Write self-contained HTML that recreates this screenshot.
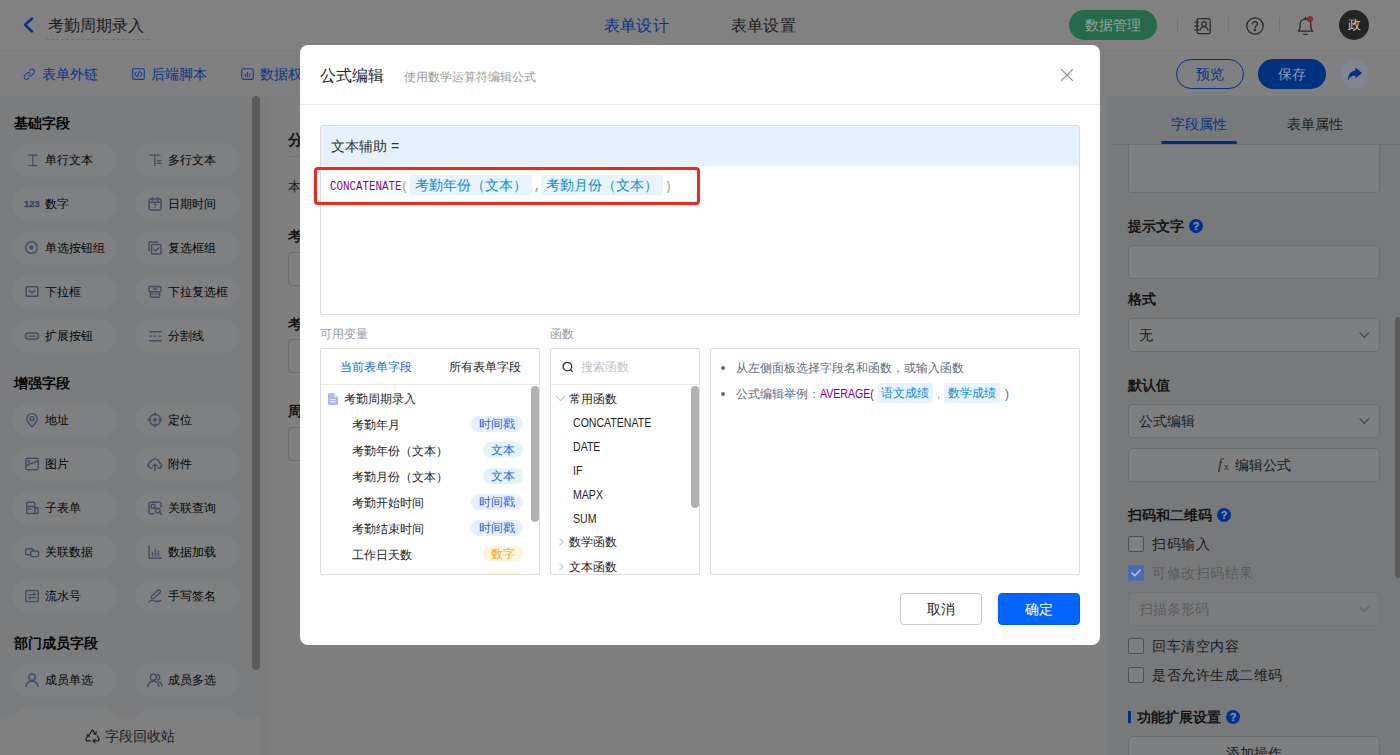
<!DOCTYPE html>
<html lang="zh">
<head>
<meta charset="utf-8">
<title>公式编辑</title>
<style>
*{box-sizing:border-box;margin:0;padding:0}
html,body{width:1400px;height:755px;overflow:hidden}
body{position:relative;background:#808080;font-family:"Liberation Sans",sans-serif;font-size:12px;color:#141414}
.abs{position:absolute}
svg{display:block;overflow:visible}
/* ---------- header ---------- */
#hdr{position:absolute;left:0;top:0;width:1400px;height:51px;background:#818181;border-bottom:1px solid #7a7a7a}
#tool{position:absolute;left:0;top:51px;width:1400px;height:45px;background:#808080;z-index:2}
.t{position:absolute;white-space:nowrap;line-height:1}
/* ---------- main ---------- */
#main{position:absolute;left:0;top:95px;width:1400px;height:660px;background:#78797b}
#side{position:absolute;left:0;top:0;width:268px;height:660px;background:#7b7c7e;overflow:hidden}
#canvas{position:absolute;left:268px;top:0;width:838px;height:660px;background:#7f7f80}
#gapR{position:absolute;left:1106px;top:0;width:1px;height:660px;background:#78797b}
#right{position:absolute;left:1107px;top:0;width:293px;height:660px;background:#78797b;overflow:hidden}
.pill{position:absolute;width:105px;height:34px;border-radius:17px;background:#7f8081}
.pill .ic{position:absolute;left:12.1px;top:9px;width:16px;height:16px}
.pill .tx{position:absolute;left:33px;top:11px;font-size:12px;line-height:12px;color:#050505;white-space:nowrap}
.sec{position:absolute;left:14px;font-size:14px;line-height:14px;font-weight:bold;color:#060606}
.bx{border:1px solid #6c6d6f;border-radius:4px;background:#7e7f81}
/* ---------- modal ---------- */
#modal{z-index:10;position:absolute;left:300px;top:45px;width:800px;height:600px;background:#fff;border-radius:8px}
.pn{border:1px solid #dcdcdc;border-radius:2px;background:#fff;overflow:hidden}
.chip{background:#e8f3fe;color:#0f8bd6;border-radius:3px;white-space:nowrap}
.mono{font-family:"Liberation Mono",monospace;font-size:12px;line-height:14px;transform:scaleX(.903);transform-origin:0 50%}
.fn{font-size:12px;line-height:12px;color:#232325;transform:scaleX(.88);transform-origin:0 50%}
</style>
</head>
<body>
<div id="hdr">
  <svg class="abs" style="left:22px;top:17px" width="12" height="16" viewBox="0 0 12 16"><path d="M10 1.5 L3 8 L10 14.5" fill="none" stroke="#06338c" stroke-width="2.4" stroke-linecap="round" stroke-linejoin="round"/></svg>
  <div class="t" style="left:48px;top:17px;font-size:16px;line-height:18px;color:#1b1b1b">考勤周期录入</div>
  <div class="abs" style="left:46px;top:39px;width:104px;height:0;border-top:1px dashed #6f6f6f"></div>
  <div class="t" style="left:603.500px;top:17px;letter-spacing:.45px;font-size:16px;line-height:18px;color:#06338c">表单设计</div>
  <div class="t" style="left:730.500px;top:17px;letter-spacing:.45px;font-size:16px;line-height:18px;color:#1d1d1d">表单设置</div>
  <div class="abs" style="left:1069px;top:10px;width:88px;height:30px;border-radius:15px;background:#256b4b"></div>
  <div class="t" style="left:1085px;top:17px;font-size:14px;line-height:16px;color:#97a39b">数据管理</div>
  <div class="abs" style="left:1177px;top:18px;width:1px;height:14px;background:#737373"></div>
  <div class="abs" style="left:1228px;top:18px;width:1px;height:14px;background:#737373"></div>
  <div class="abs" style="left:1279px;top:18px;width:1px;height:14px;background:#737373"></div>
  <!-- contacts -->
  <svg class="abs" style="left:1194px;top:16.700px" width="18" height="18" viewBox="0 0 18 18" fill="none" stroke="#2b2b2b" stroke-width="1.3" stroke-linecap="round" stroke-linejoin="round"><rect x="3.2" y="1.6" width="13" height="15" rx="1.6"/><path d="M1 5.2h3.4M1 9h3.4M1 12.8h3.4"/><circle cx="10" cy="7" r="2.3"/><path d="M6 13.2c.3-2.3 1.9-3.4 4-3.4s3.700 1.100 4 3.400"/></svg>
  <!-- help -->
  <svg class="abs" style="left:1246px;top:16.800px" width="18" height="18" viewBox="0 0 18 18" fill="none" stroke="#2b2b2b" stroke-width="1.3" stroke-linecap="round" stroke-linejoin="round"><circle cx="9" cy="9" r="8.2"/><path d="M6.600 7.100c0-1.500 1.100-2.400 2.400-2.400s2.400.9 2.400 2.200c0 1.700-2.400 1.900-2.400 3.700"/><circle cx="9" cy="13" r=".5" fill="#2b2b2b"/></svg>
  <!-- bell -->
  <svg class="abs" style="left:1297px;top:15.700px" width="17" height="20" viewBox="0 0 17 20" fill="none" stroke="#2b2b2b" stroke-width="1.3" stroke-linecap="round" stroke-linejoin="round"><path d="M1.200 15.200h14.600c-1.400-1-1.900-2.300-1.900-4.200V8.400c0-3-2.200-5.400-5.400-5.400S3.100 5.400 3.100 8.400V11c0 1.900-.5 3.200-1.900 4.200z"/><path d="M6.800 18.300h3.400"/><path d="M8.500 3V1.400"/></svg>
  <div class="abs" style="left:1307px;top:16px;width:6px;height:6px;border-radius:3px;background:#92292d"></div>
  <div class="abs" style="left:1339px;top:10px;width:30px;height:30px;border-radius:15px;background:#242424"></div>
  <div class="t" style="left:1347.500px;top:17px;font-size:13px;line-height:16px;color:#cfcfcf">政</div>
</div>
<div id="tool">
  <svg class="abs" style="left:23px;top:17px" width="12.500" height="12.500" viewBox="0 0 14 14" fill="none" stroke="#163b9a" stroke-width="1.150" stroke-linecap="round" stroke-linejoin="round"><path d="M6 8a2.700 2.700 0 0 0 3.800 0l2.400-2.400a2.700 2.700 0 0 0-3.800-3.800L7.300 2.900"/><path d="M8 6a2.700 2.700 0 0 0-3.800 0L1.800 8.400a2.700 2.700 0 0 0 3.800 3.800l1.100-1.100"/></svg>
  <div class="t" style="left:42px;top:15px;font-size:14px;line-height:16px;color:#06338c">表单外链</div>
  <svg class="abs" style="left:132px;top:17px" width="13" height="12" viewBox="0 0 13 12" fill="none" stroke="#163b9a" stroke-width="1.150" stroke-linecap="round" stroke-linejoin="round"><rect x=".7" y=".7" width="11.600" height="10.600" rx="1"/><path d="M4.400 4L2.800 6l1.600 2M8.600 4l1.600 2-1.600 2M7.300 3.200L5.700 8.800"/></svg>
  <div class="t" style="left:151px;top:15px;font-size:14px;line-height:16px;color:#06338c">后端脚本</div>
  <svg class="abs" style="left:241px;top:17px" width="13" height="12" viewBox="0 0 13 12" fill="none" stroke="#163b9a" stroke-width="1.150" stroke-linecap="round" stroke-linejoin="round"><rect x=".7" y=".7" width="11.600" height="10.600" rx="2"/><path d="M4.300 8.400V6.600M6.500 8.400V4.600M8.700 8.400V5.800"/></svg>
  <div class="t" style="left:260px;top:15px;font-size:14px;line-height:16px;color:#06338c">数据权限</div>
  <div class="abs" style="left:1176px;top:8px;width:68px;height:30px;border-radius:15px;border:1px solid #06338c"></div>
  <div class="t" style="left:1196px;top:15px;font-size:14px;line-height:16px;color:#06338c">预览</div>
  <div class="abs" style="left:1258px;top:8px;width:68px;height:30px;border-radius:15px;background:#01327f"></div>
  <div class="t" style="left:1278px;top:15px;font-size:14px;line-height:16px;color:#8e99b3">保存</div>
  <div class="abs" style="left:1340px;top:8px;width:30px;height:30px;border-radius:15px;background:#82858b;border:1px solid #7a8192"></div>
  <svg class="abs" style="left:1347px;top:16px" width="16" height="14" viewBox="0 0 16 14"><path d="M8.500.6L15 6 8.500 11.300V8.500C5 8.500 2.500 10 1 13.200 1 8 3.500 4 8.500 3.500z" fill="#022e8a"/></svg>
</div>
<div id="main">
  <div id="side">
  <div class="sec" style="top:21px">基础字段</div>
  <div class="sec" style="top:281px">增强字段</div>
  <div class="sec" style="top:541px">部门成员字段</div>
  <div class="pill" style="left:12px;top:48px"><svg class="ic" viewBox="0 0 16 16" fill="none" stroke="#454c62" stroke-width="1.45" stroke-linecap="round" stroke-linejoin="round"><path d="M4.800 3.200h8.200M4.800 13.600h8.200M8.900 3.200v10.400" stroke-width="1.250"/></svg><span class="tx">单行文本</span></div>
  <div class="pill" style="left:135px;top:48px"><svg class="ic" viewBox="0 0 16 16" fill="none" stroke="#454c62" stroke-width="1.45" stroke-linecap="round" stroke-linejoin="round"><path d="M2.600 3.200h10.400M7.800 3.200v10.600M10 8.900h4M10 11.400h4" stroke-width="1.250"/></svg><span class="tx">多行文本</span></div>
  <div class="pill" style="left:12px;top:92px"><div class="ic" style="left:12px;top:10px;width:24px;font:bold 9.4px/14px 'Liberation Sans',sans-serif;color:#3f465f;letter-spacing:0;-webkit-text-stroke:.35px #3f465f">123</div><span class="tx">数字</span></div>
  <div class="pill" style="left:135px;top:92px"><svg class="ic" viewBox="0 0 16 16" fill="none" stroke="#454c62" stroke-width="1.45" stroke-linecap="round" stroke-linejoin="round"><rect x="2" y="3" width="12" height="11" rx="1.600"/><path d="M5.300 1.600v2.800M10.700 1.600v2.800M2.300 6.200h11.400"/><path d="M6.800 8.400h2.600l-1.700 3.600" stroke-width="1"/></svg><span class="tx">日期时间</span></div>
  <div class="pill" style="left:12px;top:136px"><svg class="ic" viewBox="0 0 16 16" fill="none" stroke="#454c62" stroke-width="1.45" stroke-linecap="round" stroke-linejoin="round"><circle cx="7.500" cy="7.600" r="5.800"/><circle cx="7.500" cy="7.600" r="1.400" fill="#454c62"/></svg><span class="tx">单选按钮组</span></div>
  <div class="pill" style="left:135px;top:136px"><svg class="ic" viewBox="0 0 16 16" fill="none" stroke="#454c62" stroke-width="1.45" stroke-linecap="round" stroke-linejoin="round"><path d="M2 10.500V3.200A1.200 1.200 0 0 1 3.200 2h7.300"/><rect x="4.500" y="4.500" width="9.500" height="9.500" rx="1"/><path d="M6.800 9.200l1.900 1.900 3.200-3.400"/></svg><span class="tx">复选框组</span></div>
  <div class="pill" style="left:12px;top:180px"><svg class="ic" viewBox="0 0 16 16" fill="none" stroke="#454c62" stroke-width="1.45" stroke-linecap="round" stroke-linejoin="round"><rect x="2.200" y="2.800" width="11.600" height="9.400" rx=".8"/><path d="M5.200 6.500L8 9l2.800-2.500"/></svg><span class="tx">下拉框</span></div>
  <div class="pill" style="left:135px;top:180px"><svg class="ic" viewBox="0 0 16 16" fill="none" stroke="#454c62" stroke-width="1.45" stroke-linecap="round" stroke-linejoin="round"><rect x="2" y="2.500" width="12" height="5.200" rx="1.200"/><path d="M6.500 4.300l1.500 1.500 1.500-1.500"/><path d="M3.300 7.700v4.300a1.300 1.300 0 0 0 1.300 1.300h6.800a1.300 1.300 0 0 0 1.300-1.300V7.700"/><path d="M3.300 10.200h9.400" stroke-width="1"/></svg><span class="tx">下拉复选框</span></div>
  <div class="pill" style="left:12px;top:224px"><svg class="ic" viewBox="0 0 16 16" fill="none" stroke="#454c62" stroke-width="1.45" stroke-linecap="round" stroke-linejoin="round"><rect x="1.400" y="5" width="13.200" height="6.200" rx="3.100" stroke-width="1.500"/><path d="M4.800 8.100h6.400" stroke-width="1.100"/></svg><span class="tx">扩展按钮</span></div>
  <div class="pill" style="left:135px;top:224px"><svg class="ic" viewBox="0 0 16 16" fill="none" stroke="#454c62" stroke-width="1.45" stroke-linecap="round" stroke-linejoin="round"><path d="M2.400 3.700h11.600M2.400 12.700h11.600"/><path d="M2.400 8.100h11.600" stroke-dasharray="2.900 1.450" stroke-linecap="butt"/></svg><span class="tx">分割线</span></div>
  <div class="pill" style="left:12px;top:308px"><svg class="ic" viewBox="0 0 16 16" fill="none" stroke="#454c62" stroke-width="1.45" stroke-linecap="round" stroke-linejoin="round"><path d="M8 14.800c3.200-3 5.200-5.400 5.200-8A5.200 5.200 0 0 0 2.800 6.800c0 2.600 2 5 5.200 8z"/><circle cx="8" cy="6.600" r="1.900"/></svg><span class="tx">地址</span></div>
  <div class="pill" style="left:135px;top:308px"><svg class="ic" viewBox="0 0 16 16" fill="none" stroke="#454c62" stroke-width="1.45" stroke-linecap="round" stroke-linejoin="round"><circle cx="8" cy="7.800" r="5.500"/><circle cx="8" cy="7.800" r="1.200" fill="#454c62"/><path d="M8 1v2.600M8 12v2.600M1.200 7.800h2.600M12.200 7.800h2.600"/></svg><span class="tx">定位</span></div>
  <div class="pill" style="left:12px;top:352px"><svg class="ic" viewBox="0 0 16 16" fill="none" stroke="#454c62" stroke-width="1.45" stroke-linecap="round" stroke-linejoin="round"><rect x="1.800" y="2.200" width="12.400" height="11.600" rx="1.600"/><path d="M2.200 9.600c2.400-.2 3.600-2.600 5.600-2.400 1.700.2 3.600-1.200 6-2.800"/><circle cx="4.800" cy="5.200" r=".7" fill="#454c62"/></svg><span class="tx">图片</span></div>
  <div class="pill" style="left:135px;top:352px"><svg class="ic" viewBox="0 0 16 16" fill="none" stroke="#454c62" stroke-width="1.45" stroke-linecap="round" stroke-linejoin="round"><path d="M5 12.200H4.200A3.200 3.200 0 0 1 3.700 5.900 4.500 4.500 0 0 1 12.400 6.700a2.800 2.800 0 0 1-.4 5.500H11"/><path d="M8 14.500V8.200M5.800 10.200L8 8l2.200 2.200"/></svg><span class="tx">附件</span></div>
  <div class="pill" style="left:12px;top:396px"><svg class="ic" viewBox="0 0 16 16" fill="none" stroke="#454c62" stroke-width="1.45" stroke-linecap="round" stroke-linejoin="round"><rect x="2.800" y="2.300" width="7.900" height="11.100" rx="1"/><path d="M2.800 6.500h7.900M4.300 8.900h2.600"/><rect x="10.700" y="7.800" width="3.400" height="5.600" rx=".6"/></svg><span class="tx">子表单</span></div>
  <div class="pill" style="left:135px;top:396px"><svg class="ic" viewBox="0 0 16 16" fill="none" stroke="#454c62" stroke-width="1.45" stroke-linecap="round" stroke-linejoin="round"><path d="M14 7V3.400a1.200 1.200 0 0 0-1.200-1.200H3.200A1.200 1.200 0 0 0 2 3.400v9.200a1.200 1.200 0 0 0 1.200 1.200H7"/><rect x="4.300" y="4.500" width="3.400" height="3.400"/><circle cx="10.800" cy="10.600" r="2.300"/><path d="M12.500 12.300l2 2M7.700 7.900l1.500 1.200"/></svg><span class="tx">关联查询</span></div>
  <div class="pill" style="left:12px;top:440px"><svg class="ic" viewBox="0 0 16 16" fill="none" stroke="#454c62" stroke-width="1.45" stroke-linecap="round" stroke-linejoin="round"><path d="M6.500 10.800H3.200A1.600 1.600 0 0 1 1.600 9.200V6.400a1.600 1.600 0 0 1 1.600-1.600h4.600a1.600 1.600 0 0 1 1.600 1.600v.8"/><rect x="6.600" y="7" width="8" height="5.600" rx="1.600"/></svg><span class="tx">关联数据</span></div>
  <div class="pill" style="left:135px;top:440px"><svg class="ic" viewBox="0 0 16 16" fill="none" stroke="#454c62" stroke-width="1.45" stroke-linecap="round" stroke-linejoin="round"><path d="M2 1.800v12.400h12.400"/><path d="M5.400 12V8.200M8.400 12V5.400M11.400 12V7"/></svg><span class="tx">数据加载</span></div>
  <div class="pill" style="left:12px;top:484px"><svg class="ic" viewBox="0 0 16 16" fill="none" stroke="#454c62" stroke-width="1.45" stroke-linecap="round" stroke-linejoin="round"><rect x="1.800" y="2.400" width="12.400" height="11.200" rx=".8"/><path d="M4.600 6.600h6.800l-1.600-1.500M11.400 9.400H4.600l1.600 1.500"/></svg><span class="tx">流水号</span></div>
  <div class="pill" style="left:135px;top:484px"><svg class="ic" viewBox="0 0 16 16" fill="none" stroke="#454c62" stroke-width="1.45" stroke-linecap="round" stroke-linejoin="round"><path d="M4.200 10.800l.5-2.600 6-6a1.300 1.300 0 0 1 1.900 0l.4.400a1.300 1.300 0 0 1 0 1.900l-6 6z"/><path d="M2 13.800c2-1.600 3.800-1.800 5.600-.9 1.700.9 3.600.7 6.200-.3"/></svg><span class="tx">手写签名</span></div>
  <div class="pill" style="left:12px;top:568px"><svg class="ic" viewBox="0 0 16 16" fill="none" stroke="#454c62" stroke-width="1.45" stroke-linecap="round" stroke-linejoin="round"><circle cx="8" cy="5.200" r="3.200"/><path d="M2 14.600c.4-3.600 2.800-5.400 6-5.400s5.600 1.800 6 5.400"/></svg><span class="tx">成员单选</span></div>
  <div class="pill" style="left:135px;top:568px"><svg class="ic" viewBox="0 0 16 16" fill="none" stroke="#454c62" stroke-width="1.45" stroke-linecap="round" stroke-linejoin="round"><circle cx="6.400" cy="5.200" r="3"/><path d="M1 14.200c.3-3.300 2.500-5 5.400-5s5.100 1.700 5.400 5"/><path d="M10.400 2.500a2.900 2.900 0 0 1 .3 5.600M12.200 9.600c1.600.7 2.600 2.200 2.800 4.400"/></svg><span class="tx">成员多选</span></div>
  <div class="pill" style="left:12px;top:612px"><span class="tx">部门单选</span></div>
  <div class="pill" style="left:135px;top:612px"><span class="tx">部门多选</span></div>
  <div class="abs" style="left:252px;top:1px;width:8px;height:574px;border-radius:4px;background:#5b5b5b"></div>
  <div class="abs" style="left:0;top:622px;width:260px;height:38px;background:#808080"></div>
  <svg class="abs" style="left:84.500px;top:633.500px" width="15" height="14" viewBox="0 0 15 14" fill="none" stroke="#1c1c1c" stroke-width="1.200" stroke-linecap="round" stroke-linejoin="round"><path d="M5 4.600L7.400.8l2.500 3.800"/><path d="M8.600 5.200l2.600.3.200-2.600z" fill="#1c1c1c" stroke-width=".6"/><path d="M12.200 6.800l2 3.400-1 1.700H8.400"/><path d="M9.900 10.200L8.200 11.900l1.700 1.700"/><path d="M5.600 11.900H1.700L.8 10.200l2.100-3.400"/><path d="M1.700 5.800l2.500-.4.500 2.500z" fill="#1c1c1c" stroke-width=".6"/></svg>
  <div class="t" style="left:105px;top:633px;font-size:14px;line-height:16px;color:#1c1c1c">字段回收站</div>
</div>
  <div id="canvas">
  <div class="t" style="left:20px;top:37.300px;font-size:15px;line-height:16px;font-weight:bold;color:#151515">分组标题</div>
  <div class="abs" style="left:20px;top:61px;width:792px;height:1px;background:#747474"></div>
  <div class="t" style="left:20px;top:85px;font-size:13px;line-height:14px;color:#1c1c1c">本表单用于录入考勤周期</div>
  <div class="t" style="left:20px;top:134px;font-size:14px;line-height:14px;font-weight:bold;color:#151515">考勤年月</div>
  <div class="abs bx" style="left:20px;top:157px;width:380px;height:34px"></div>
  <div class="t" style="left:20px;top:221.500px;font-size:14px;line-height:14px;font-weight:bold;color:#151515">考勤年份</div>
  <div class="abs bx" style="left:20px;top:244px;width:380px;height:34px"></div>
  <div class="t" style="left:20px;top:309px;font-size:14px;line-height:14px;font-weight:bold;color:#151515">周期</div>
  <div class="abs bx" style="left:20px;top:332px;width:380px;height:34px"></div>
</div>
  <div id="gapR"></div>
  <div id="right">
<div class="abs bx" style="left:21px;top:40px;width:252px;height:58px"></div>
<div class="abs" style="left:0;top:0;width:293px;height:49px;background:#78797b"></div>
<div class="t" style="left:64px;top:22px;font-size:14px;line-height:14px;color:#06338c">字段属性</div>
<div class="t" style="left:180px;top:22px;font-size:14px;line-height:14px;color:#1c1c1c">表单属性</div>
<div class="abs" style="left:7px;top:49px;width:286px;height:1px;background:#6e6f71"></div>
<div class="abs" style="left:54px;top:46px;width:76px;height:3px;border-radius:1.500px;background:#012e84"></div>
<div class="t" style="left:21px;top:124px;font-size:14px;line-height:14px;font-weight:bold;color:#141414">提示文字</div><div class="abs" style="left:82px;top:124px;width:14px;height:14px;border-radius:7px;background:#02318c;color:#8e9fc4;font:bold 11px/14px 'Liberation Sans',sans-serif;text-align:center">?</div>
<div class="abs bx" style="left:21px;top:150px;width:252px;height:34px"></div>
<div class="t" style="left:21px;top:197px;font-size:14px;line-height:14px;font-weight:bold;color:#141414">格式</div>
<div class="abs bx" style="left:21px;top:223px;width:252px;height:34px"></div>
<div class="t" style="left:32px;top:233px;font-size:14px;line-height:14px;color:#1c1c1c">无</div><svg class="abs" style="left:252px;top:237px" width="10.500" height="6.100" viewBox="0 0 12 7"><path d="M1 1l5 5 5-5" fill="none" stroke="#44474e" stroke-width="1.450" stroke-linecap="round" stroke-linejoin="round"/></svg>
<div class="t" style="left:21px;top:283px;font-size:14px;line-height:14px;font-weight:bold;color:#141414">默认值</div>
<div class="abs bx" style="left:21px;top:309px;width:252px;height:34px"></div>
<div class="t" style="left:32px;top:319px;font-size:14px;line-height:14px;color:#1c1c1c">公式编辑</div><svg class="abs" style="left:252px;top:323px" width="10.500" height="6.100" viewBox="0 0 12 7"><path d="M1 1l5 5 5-5" fill="none" stroke="#44474e" stroke-width="1.450" stroke-linecap="round" stroke-linejoin="round"/></svg>
<div class="abs bx" style="left:21px;top:353px;width:252px;height:34px"></div>
<div class="t" style="left:111px;top:361px;font:italic 15px/16px 'Liberation Serif',serif;color:#2a2a2a">f</div><div class="t" style="left:117px;top:368px;font-size:9px;line-height:9px;color:#2a2a2a">x</div>
<div class="t" style="left:128px;top:363px;font-size:14px;line-height:14px;color:#1c1c1c">编辑公式</div>
<div class="t" style="left:21px;top:413px;font-size:14px;line-height:14px;font-weight:bold;color:#141414">扫码和二维码</div><div class="abs" style="left:110px;top:413px;width:14px;height:14px;border-radius:7px;background:#02318c;color:#8e9fc4;font:bold 11px/14px 'Liberation Sans',sans-serif;text-align:center">?</div>
<div class="abs" style="left:21px;top:441px;width:16px;height:16px;border-radius:2px;border:1px solid #4c4f55;background:#7e7f81"></div><div class="t" style="left:45px;top:442px;font-size:14px;line-height:14px;letter-spacing:.5px;color:#1a1a1a">扫码输入</div>
<div class="abs" style="left:21px;top:470px;width:16px;height:16px;border-radius:2px;background:#4a6cb3"></div><svg class="abs" style="left:24px;top:474px" width="10" height="8" viewBox="0 0 10 8"><path d="M1 4l2.800 2.800L9 1.200" fill="none" stroke="#b9c3da" stroke-width="1.600" stroke-linecap="round" stroke-linejoin="round"/></svg><div class="t" style="left:45px;top:471px;font-size:14px;line-height:14px;letter-spacing:.5px;color:#5b5b5b">可修改扫码结果</div>
<div class="abs" style="left:21px;top:497px;width:252px;height:34px;border:1px solid #737476;border-radius:4px;background:#7b7c7e"></div>
<div class="t" style="left:32px;top:507px;font-size:14px;line-height:14px;color:#5e5e5e">扫描条形码</div><svg class="abs" style="left:252px;top:511px" width="10.500" height="6.100" viewBox="0 0 12 7"><path d="M1 1l5 5 5-5" fill="none" stroke="#63656a" stroke-width="1.450" stroke-linecap="round" stroke-linejoin="round"/></svg>
<div class="abs" style="left:21px;top:543px;width:16px;height:16px;border-radius:2px;border:1px solid #4c4f55;background:#7e7f81"></div><div class="t" style="left:45px;top:544px;font-size:14px;line-height:14px;letter-spacing:.5px;color:#1a1a1a">回车清空内容</div>
<div class="abs" style="left:21px;top:572px;width:16px;height:16px;border-radius:2px;border:1px solid #4c4f55;background:#7e7f81"></div><div class="t" style="left:45px;top:573px;font-size:14px;line-height:14px;letter-spacing:.5px;color:#1a1a1a">是否允许生成二维码</div>
<div class="abs" style="left:21px;top:616px;width:3px;height:12px;background:#012e84"></div>
<div class="t" style="left:30px;top:615px;font-size:14px;line-height:14px;font-weight:bold;color:#141414">功能扩展设置</div><div class="abs" style="left:119px;top:615px;width:14px;height:14px;border-radius:7px;background:#02318c;color:#8e9fc4;font:bold 11px/14px 'Liberation Sans',sans-serif;text-align:center">?</div>
<div class="abs bx" style="left:21px;top:641px;width:252px;height:34px"></div>
<div class="t" style="left:119px;top:651px;font-size:14px;line-height:14px;color:#1c1c1c">添加操作</div>
<div class="abs" style="left:288px;top:222px;width:6px;height:261px;border-radius:3px;background:#5c5c5c"></div>
</div>
</div>
<div id="modal">
<div class="t" style="left:20px;top:22px;font-size:16px;line-height:18px;color:#262626">公式编辑</div>
<div class="t" style="left:104px;top:25px;font-size:12px;line-height:14px;color:#9a9a9a">使用数学运算符编辑公式</div>
<svg class="abs" style="left:761px;top:24px" width="12" height="12" viewBox="0 0 12 12"><path d="M.6.6l10.800 10.800M11.400.6L.6 11.400" fill="none" stroke="#8a8a8a" stroke-width="1.200" stroke-linecap="round"/></svg>
<div class="abs" style="left:0;top:59px;width:800px;height:1px;background:#e9e9e9"></div>
<div class="abs" style="left:20px;top:80px;width:760px;height:190px;border:1px solid #dcdcdc;border-radius:2px;background:#fff"></div>
<div class="abs" style="left:21px;top:81px;width:758px;height:40px;background:#e5f2fd"></div>
<div class="t" style="left:31px;top:94px;font-size:14px;line-height:14px;color:#303030">文本辅助 =</div>
<div class="abs" style="left:14px;top:122px;width:386px;height:38px;border:3px solid #f4261d;border-radius:4px"></div>
<div class="t mono" style="left:30px;top:135px;color:#7b0a8c">CONCATENATE<span style="color:#999977">(</span></div>
<div class="abs chip" style="left:110px;top:130px;width:122px;height:20px;font-size:14px;line-height:20px;padding-left:5px">考勤年份（文本）</div>
<div class="t mono" style="left:234px;top:135px;color:#999977;font-weight:bold">,</div>
<div class="abs chip" style="left:241px;top:130px;width:122px;height:20px;font-size:14px;line-height:20px;padding-left:5px">考勤月份（文本）</div>
<div class="t mono" style="left:365px;top:135px;color:#999977">)</div>
<div class="t" style="left:20px;top:283px;font-size:12px;line-height:12px;color:#939aa6">可用变量</div>
<div class="t" style="left:250px;top:283px;font-size:12px;line-height:12px;color:#939aa6">函数</div>
<div class="abs pn" style="left:20px;top:303px;width:220px;height:227px">
<div class="abs" style="left:0;top:35px;width:218px;height:1px;background:#e6e6e6"></div>
<div class="t" style="left:19px;top:12px;font-size:12px;line-height:12px;color:#1564f4">当前表单字段</div>
<div class="t" style="left:128px;top:12px;font-size:12px;line-height:12px;color:#232325">所有表单字段</div>
<svg class="abs" style="left:7px;top:44px" width="10" height="12" viewBox="0 0 10 12"><path d="M1.200 0h5L10 3.800v7a1.200 1.200 0 0 1-1.200 1.200H1.200A1.200 1.200 0 0 1 0 10.800V1.200A1.200 1.200 0 0 1 1.200 0z" fill="#a9b7fb"/><path d="M6 0v3a1 1 0 0 0 1 1h3z" fill="#dfe5ff"/><path d="M2.300 6.500h5.400M2.300 8.800h5.400" stroke="#fff" stroke-width="1"/></svg>
<div class="t" style="left:23px;top:44px;font-size:12px;line-height:12px;color:#232325">考勤周期录入</div>
<div class="t" style="left:31px;top:69.9px;font-size:12px;line-height:12px;color:#232325">考勤年月</div>
<div class="abs" style="left:150px;top:67.3px;width:52px;height:16px;border-radius:8px;background:#e8f0fe;color:#2b60ec;font-size:12px;line-height:16px;text-align:center">时间戳</div>
<div class="t" style="left:31px;top:95.9px;font-size:12px;line-height:12px;color:#232325">考勤年份（文本）</div>
<div class="abs" style="left:162px;top:93.3px;width:40px;height:16px;border-radius:8px;background:#e2f5f4;color:#2468f2;font-size:12px;line-height:16px;text-align:center">文本</div>
<div class="t" style="left:31px;top:121.9px;font-size:12px;line-height:12px;color:#232325">考勤月份（文本）</div>
<div class="abs" style="left:162px;top:119.3px;width:40px;height:16px;border-radius:8px;background:#e2f5f4;color:#2468f2;font-size:12px;line-height:16px;text-align:center">文本</div>
<div class="t" style="left:31px;top:147.9px;font-size:12px;line-height:12px;color:#232325">考勤开始时间</div>
<div class="abs" style="left:150px;top:145.3px;width:52px;height:16px;border-radius:8px;background:#e8f0fe;color:#2b60ec;font-size:12px;line-height:16px;text-align:center">时间戳</div>
<div class="t" style="left:31px;top:173.9px;font-size:12px;line-height:12px;color:#232325">考勤结束时间</div>
<div class="abs" style="left:150px;top:171.3px;width:52px;height:16px;border-radius:8px;background:#e8f0fe;color:#2b60ec;font-size:12px;line-height:16px;text-align:center">时间戳</div>
<div class="t" style="left:31px;top:199.9px;font-size:12px;line-height:12px;color:#232325">工作日天数</div>
<div class="abs" style="left:162px;top:197.3px;width:40px;height:16px;border-radius:8px;background:#fff4dc;color:#f5a623;font-size:12px;line-height:16px;text-align:center">数字</div>
<div class="t" style="left:31px;top:225.9px;font-size:12px;line-height:12px;color:#232325">休息日天数</div>
<div class="abs" style="left:162px;top:223.3px;width:40px;height:16px;border-radius:8px;background:#fff4dc;color:#f5a623;font-size:12px;line-height:16px;text-align:center">数字</div>
<div class="abs" style="left:210px;top:37px;width:8px;height:135.500px;border-radius:4px;background:#b1b1b1"></div>
</div>
<div class="abs pn" style="left:250px;top:303px;width:150px;height:227px">
<div class="abs" style="left:0;top:35px;width:148px;height:1px;background:#e6e6e6"></div>
<svg class="abs" style="left:11px;top:12px" width="12" height="12" viewBox="0 0 12 12" fill="none" stroke="#303133" stroke-width="1.300" stroke-linecap="round"><circle cx="5.400" cy="5.600" r="4.300"/><path d="M8.600 8.900l1.600 1.600"/></svg>
<div class="t" style="left:30px;top:12px;font-size:12px;line-height:12px;color:#c0c4cc">搜索函数</div>
<svg class="abs" style="left:4px;top:46px" width="11" height="7" viewBox="0 0 11 7"><path d="M.8.800l4.700 4.900L10.200.800" fill="none" stroke="#c3c7cf" stroke-width="1.100" stroke-linecap="round" stroke-linejoin="round"/></svg>
<div class="t" style="left:18px;top:44px;font-size:12px;line-height:12px;color:#232325">常用函数</div>
<div class="t fn" style="left:22px;top:67.9px">CONCATENATE</div>
<div class="t fn" style="left:22px;top:91.9px">DATE</div>
<div class="t fn" style="left:22px;top:115.9px">IF</div>
<div class="t fn" style="left:22px;top:139.9px">MAPX</div>
<div class="t fn" style="left:22px;top:163.9px">SUM</div>
<svg class="abs" style="left:8px;top:189.3px" width="5" height="8" viewBox="0 0 5 8"><path d="M.8.800L4.200 4 .8 7.200" fill="none" stroke="#c3c7cf" stroke-width="1.100" stroke-linecap="round" stroke-linejoin="round"/></svg>
<div class="t" style="left:18px;top:187.3px;font-size:12px;line-height:12px;color:#232325">数学函数</div>
<svg class="abs" style="left:8px;top:213.6px" width="5" height="8" viewBox="0 0 5 8"><path d="M.8.800L4.200 4 .8 7.200" fill="none" stroke="#c3c7cf" stroke-width="1.100" stroke-linecap="round" stroke-linejoin="round"/></svg>
<div class="t" style="left:18px;top:211.6px;font-size:12px;line-height:12px;color:#232325">文本函数</div>
<div class="abs" style="left:140px;top:37px;width:8px;height:122px;border-radius:4px;background:#b1b1b1"></div>
</div>
<div class="abs pn" style="left:410px;top:303px;width:370px;height:227px">
<div class="abs" style="left:10px;top:17px;width:4px;height:4px;border-radius:2px;background:#5e6d82"></div>
<div class="abs" style="left:10px;top:43px;width:4px;height:4px;border-radius:2px;background:#5e6d82"></div>
<div class="t" style="left:25px;top:13px;font-size:12px;line-height:12px;color:#5e6d82">从左侧面板选择字段名和函数，或输入函数</div>
<div class="t" style="left:25px;top:39px;font-size:12px;line-height:12px;color:#5e6d82">公式编辑举例：</div>
<div class="t fn" style="left:109px;top:39px;color:#770088">AVERAGE(</div>
<div class="abs chip" style="left:166px;top:34px;width:56px;height:20px;font-size:12px;line-height:20px;text-align:center">语文成绩</div>
<div class="t" style="left:226px;top:39px;font-size:12px;line-height:12px;color:#999977">,</div>
<div class="abs chip" style="left:233px;top:34px;width:56px;height:20px;font-size:12px;line-height:20px;text-align:center">数学成绩</div>
<div class="t" style="left:294px;top:39px;font-size:12px;line-height:12px;color:#5e6d82">)</div>
</div>
<div class="abs" style="left:600px;top:548px;width:82px;height:32px;border:1px solid #c9c9c9;border-radius:4px;background:#fff;font-size:14px;line-height:30px;text-align:center;color:#262626">取消</div>
<div class="abs" style="left:698px;top:548px;width:82px;height:32px;border-radius:4px;background:#0265ff;border:1px solid #0059fe;font-size:14px;line-height:30px;text-align:center;color:#fff">确定</div>
</div>
</body>
</html>
